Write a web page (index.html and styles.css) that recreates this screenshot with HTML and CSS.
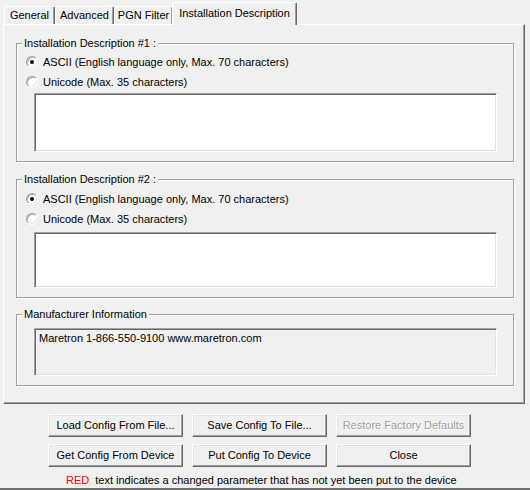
FILE: index.html
```html
<!DOCTYPE html>
<html>
<head>
<meta charset="utf-8">
<title>Installation Description</title>
<link rel="stylesheet" href="styles.css">
</head>
<body>
<div class="tabs">
  <div class="tab tab-general">General</div>
  <div class="tab tab-advanced">Advanced</div>
  <div class="tab tab-pgn">PGN Filter</div>
  <div class="tab active">Installation Description</div>
</div>
<div class="panel">
  <fieldset class="group">
    <legend>Installation Description #1 :</legend>
    <div class="body">
      <label class="opt"><span class="radio checked"></span>ASCII (English language only, Max. 70 characters)</label>
      <label class="opt"><span class="radio"></span>Unicode (Max. 35 characters)</label>
      <div class="edit"></div>
    </div>
  </fieldset>
  <fieldset class="group second">
    <legend>Installation Description #2 :</legend>
    <div class="body">
      <label class="opt"><span class="radio checked"></span>ASCII (English language only, Max. 70 characters)</label>
      <label class="opt"><span class="radio"></span>Unicode (Max. 35 characters)</label>
      <div class="edit"></div>
    </div>
  </fieldset>
  <fieldset class="group third">
    <legend>Manufacturer Information</legend>
    <div class="body">
      <div class="edit readonly">Maretron 1-866-550-9100 www.maretron.com</div>
    </div>
  </fieldset>
</div>
<div class="buttons">
  <button class="btn">Load Config From File...</button>
  <button class="btn">Save Config To File...</button>
  <button class="btn disabled">Restore Factory Defaults</button>
  <button class="btn">Get Config From Device</button>
  <button class="btn">Put Config To Device</button>
  <button class="btn">Close</button>
</div>
<p class="note"><span class="red">RED</span>text indicates a changed parameter that has not yet been put to the device</p>
<div class="bottom-bar"></div>
</body>
</html>
```
FILE: styles.css
```css
html, body {
  margin: 0;
  padding: 0;
  background: #f0f0f0;
}
body {
  width: 530px;
  height: 490px;
  overflow: hidden;
  font-family: "Liberation Sans", Arial, sans-serif;
  font-size: 11px;
  line-height: 13px;
  color: #000;
}
.tabs {
  display: flex;
  align-items: flex-end;
  height: 24px;
  padding-left: 4px;
}
.tab {
  box-sizing: border-box;
  height: 18px;
  padding: 2px 0 0;
  border-top: 1px solid #fff;
  border-left: 1px solid #fff;
  border-right: 1px solid #696969;
  border-radius: 2px 2px 0 0;
  box-shadow: inset -1px 0 0 #a0a0a0;
  white-space: nowrap;
  text-align: center;
  flex: none;
}
.tab-general {
  width: 51px;
}
.tab-advanced {
  width: 59px;
}
.tab-pgn {
  width: 59px;
}
.tab.active {
  position: relative;
  z-index: 1;
  width: 125px;
  height: 23px;
  margin: 0 0 -1px -1px;
  padding-top: 4px;
  background: #f0f0f0;
}
.panel {
  box-sizing: border-box;
  width: 522px;
  height: 380px;
  margin-left: 3px;
  padding: 12px 10px 0 12px;
  border: 1px solid;
  border-color: #fff #696969 #696969 #fff;
  box-shadow: inset -1px -1px 0 #a0a0a0;
}
.group {
  margin: 0;
  padding: 0;
  min-width: 0;
  border: 1px solid #a0a0a0;
  box-shadow: 1px 1px 0 #fff, inset 1px 1px 0 #fff;
}
.group legend {
  margin-left: 5px;
  padding: 0 2px;
  height: 13px;
  line-height: 13px;
  background: #f0f0f0;
}
.group .body {
  padding: 2px 0 9px 9px;
}
.group.second {
  margin-top: 11px;
}
.group.second .body {
  padding-top: 3px;
}
.group.third {
  margin-top: 10px;
}
.group.third .body {
  padding-top: 7px;
  padding-bottom: 9px;
}
.opt {
  display: flex;
  align-items: center;
  gap: 5px;
  height: 20px;
}
.radio {
  position: relative;
  box-sizing: border-box;
  width: 12px;
  height: 12px;
  border-radius: 50%;
  border: 1px solid;
  border-color: #a0a0a0 #fff #fff #a0a0a0;
  background: #fff;
  box-shadow: inset 1px 1px 0 #b4b4b4, inset -1px -1px 0 #e3e3e3;
  flex: none;
}
.radio.checked::after {
  content: "";
  position: absolute;
  left: 3px;
  top: 3px;
  width: 4px;
  height: 4px;
  border-radius: 50%;
  background: #000;
}
.edit {
  box-sizing: border-box;
  width: 463px;
  height: 59px;
  margin: 1px 0 0 8px;
  border: 1px solid;
  border-color: #a0a0a0 #fff #fff #a0a0a0;
  box-shadow: inset 1px 1px 0 #696969, inset -1px -1px 0 #e3e3e3;
  background: #fff;
}
.group.second .edit {
  height: 56px;
  margin-top: 3px;
}
.edit.readonly {
  height: 48px;
  margin-top: 0;
  padding: 3px 4px;
  background: #f0f0f0;
}
.buttons {
  display: grid;
  grid-template-columns: repeat(3, 135px);
  grid-auto-rows: 23px;
  column-gap: 9px;
  row-gap: 7px;
  margin: 10px 0 0 48px;
}
.btn {
  box-sizing: border-box;
  margin: 0;
  padding: 0;
  font: inherit;
  color: #000;
  background: #f0f0f0;
  border: 1px solid;
  border-color: #fff #696969 #696969 #fff;
  box-shadow: inset -1px -1px 0 #a0a0a0, inset 1px 1px 0 #e3e3e3;
  border-radius: 0;
}
.btn.disabled {
  color: #a0a0a0;
  text-shadow: 1px 1px 0 #fff;
}
.note {
  margin: 7px 0 0 66px;
  height: 13px;
}
.red {
  color: #ff0000;
  margin-right: 6px;
}
.bottom-bar {
  margin-top: 1px;
  height: 4px;
  background: #6e6e6e;
}
```
